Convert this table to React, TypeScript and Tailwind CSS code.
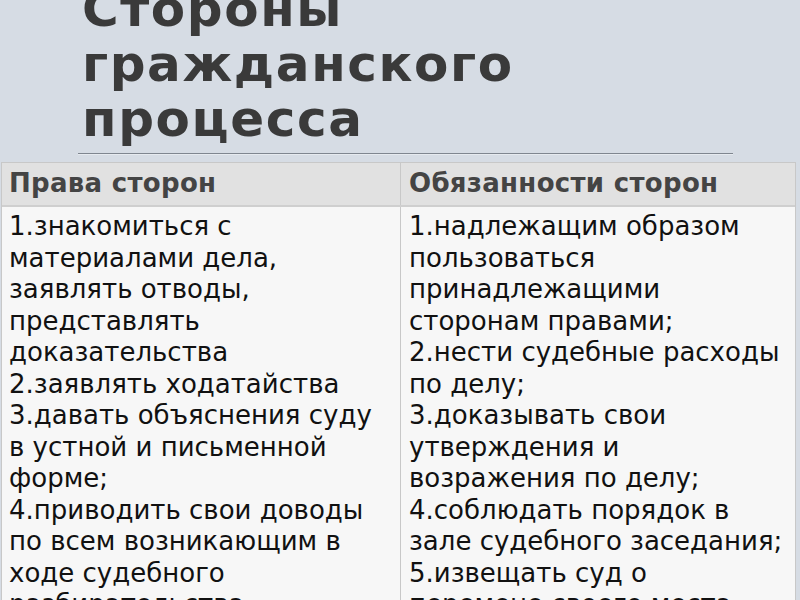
const RIGHTS = [
  '1.знакомиться с',
  'материалами дела,',
  'заявлять отводы,',
  'представлять',
  'доказательства',
  '2.заявлять ходатайства',
  '3.давать объяснения суду',
  'в устной и письменной',
  'форме;',
  '4.приводить свои доводы',
  'по всем возникающим в',
  'ходе судебного',
  'разбирательства',
]

const DUTIES = [
  '1.надлежащим образом',
  'пользоваться',
  'принадлежащими',
  'сторонам правами;',
  '2.нести судебные расходы',
  'по делу;',
  '3.доказывать свои',
  'утверждения и',
  'возражения по делу;',
  '4.соблюдать порядок в',
  'зале судебного заседания;',
  '5.извещать суд о',
  'перемене своего места',
]

export default function App() {
  return (
    <div className="w-[800px] h-[600px] overflow-hidden bg-[#d6dce4] font-['DejaVu_Sans',sans-serif]">
      {/* Title */}
      <div className="pl-[82px] -mt-[18px]">
        <h1 className="text-[50px] leading-[55px] font-bold text-[#3a3a3a] tracking-[1.6px]">
          Стороны
          <br />
          гражданского
          <br />
          процесса
        </h1>
      </div>
      <div className="ml-[78px] w-[655px] mt-[6px] border-t border-[#7f868f] border-b border-b-[#e6eaef]" />

      {/* Table */}
      <div className="mt-[7px] ml-[1px] mr-[4px] border border-[#c8c8c8] bg-[#f7f7f7]">
        <div className="grid grid-cols-[399px_1fr] bg-[#e1e1e1] border-b-2 border-[#cfcfcf] h-[44px]">
          <div className="pl-[7px] pt-[4px] border-r border-[#c8c8c8] text-[26px] leading-[32px] font-bold text-[#444444] tracking-[0.3px]">
            Права сторон
          </div>
          <div className="pl-[8px] pt-[4px] text-[26px] leading-[32px] font-bold text-[#444444] tracking-[0.3px]">
            Обязанности сторон
          </div>
        </div>
        <div className="grid grid-cols-[399px_1fr] text-[26px] leading-[31.5px] text-[#111111] whitespace-nowrap">
          <div className="pl-[7px] pt-[4px] border-r border-[#c8c8c8]">
            {RIGHTS.map((l, i) => (
              <div key={i}>{l}</div>
            ))}
          </div>
          <div className="pl-[8px] pt-[4px]">
            {DUTIES.map((l, i) => (
              <div key={i}>{l}</div>
            ))}
          </div>
        </div>
      </div>
    </div>
  )
}
